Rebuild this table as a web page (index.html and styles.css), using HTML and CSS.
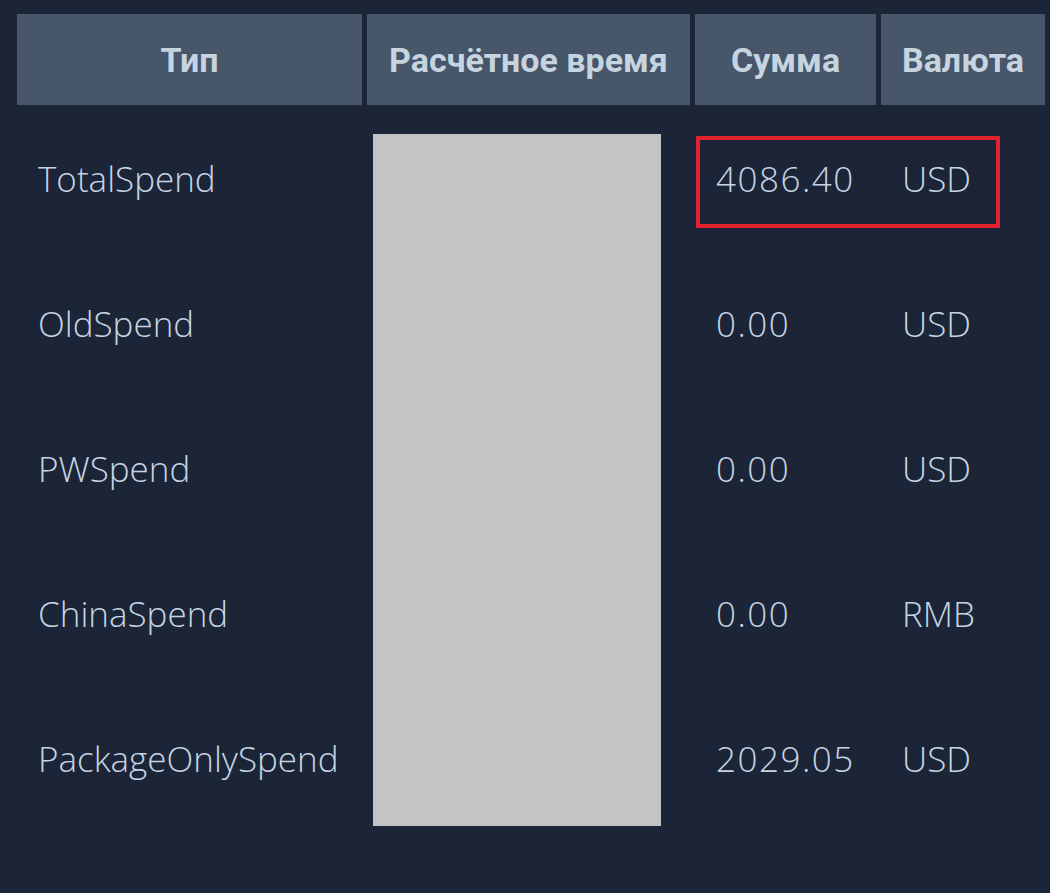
FILE: index.html
```html
<!DOCTYPE html>
<html lang="ru">
<head>
<meta charset="utf-8">
<title>Spend</title>
<link rel="stylesheet" href="styles.css">
</head>
<body>
<div class="wrap">
  <table class="spend">
    <thead>
      <tr>
        <th class="c-type">Тип</th>
        <th class="c-time">Расчётное время</th>
        <th class="c-sum">Сумма</th>
        <th class="c-cur">Валюта</th>
      </tr>
    </thead>
    <tbody>
      <tr><td>TotalSpend</td><td></td><td class="amt">4086.40</td><td>USD</td></tr>
      <tr><td>OldSpend</td><td></td><td class="amt">0.00</td><td>USD</td></tr>
      <tr><td>PWSpend</td><td></td><td class="amt">0.00</td><td>USD</td></tr>
      <tr><td>ChinaSpend</td><td></td><td class="amt">0.00</td><td>RMB</td></tr>
      <tr><td>PackageOnlySpend</td><td></td><td class="amt">2029.05</td><td>USD</td></tr>
    </tbody>
  </table>
  <div class="redact"></div>
  <div class="highlight"></div>
</div>
</body>
</html>
```

FILE: styles.css
```css
html, body {
  margin: 0;
  padding: 0;
  background: #1b2537;
  height: 100%;
}
body {
  overflow: hidden;
}
.wrap {
  position: relative;
  padding: 14px 0 0 12px;
}
.spend {
  border-collapse: separate;
  border-spacing: 5px 0;
  table-layout: fixed;
}
.spend th {
  height: 91px;
  padding: 0;
  background: #475669;
  color: #c6d4e0;
  font-family: Roboto, "Liberation Sans", sans-serif;
  font-weight: 700;
  font-size: 34px;
  line-height: 38px;
  text-align: center;
  vertical-align: middle;
}
.c-type { width: 345px; }
.c-time { width: 323px; }
.c-sum { width: 181px; }
.c-cur { width: 164px; }
.spend td {
  height: 143px;
  padding: 2px 0 0 21px;
  color: #c6d4e2;
  font-family: "Open Sans", Lato, sans-serif;
  font-weight: 300;
  font-size: 35px;
  line-height: 40px;
  vertical-align: middle;
  white-space: nowrap;
}
.spend td.amt {
  letter-spacing: 1.5px;
}
.redact {
  position: absolute;
  left: 373px;
  top: 134px;
  width: 288px;
  height: 692px;
  background: #c4c4c4;
}
.highlight {
  position: absolute;
  left: 696px;
  top: 136px;
  width: 304px;
  height: 92px;
  box-sizing: border-box;
  border: 4px solid #e0222b;
}
```
